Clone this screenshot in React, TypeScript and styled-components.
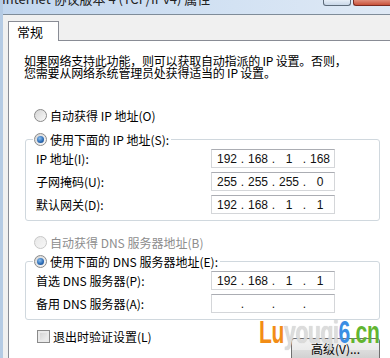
import styled, { createGlobalStyle } from 'styled-components'

const GlobalStyle = createGlobalStyle`
  html, body {
    margin: 0;
    padding: 0;
    background: #f0f0f0;
  }
  body {
    font-family: "Noto Sans CJK SC", "Liberation Sans", sans-serif;
    font-size: 12px;
    color: #000;
  }
`

interface RadioProps {
  $checked?: boolean
  $disabled?: boolean
}

const Radio: React.FC<RadioProps> = ({ $checked, $disabled }) => (
  <RadioOuter $disabled={$disabled}>{$checked && <RadioDot />}</RadioOuter>
)

const IpField: React.FC<{ parts: string[] }> = ({ parts }) => (
  <Field>
    {parts.map((p, i) => (
      <Part key={i}>
        {i > 0 && <Dot>.</Dot>}
        <Octet>{p}</Octet>
      </Part>
    ))}
  </Field>
)

const App: React.FC = () => {
  return (
    <Window>
      <GlobalStyle />
      <TitleBar>
        <TitleText>Internet 协议版本 4 (TCP/IPv4) 属性</TitleText>
        <Controls>
          <MaxButton />
          <CloseButton />
        </Controls>
      </TitleBar>
      <Body>
        <Tabs>
          <Tab>常规</Tab>
        </Tabs>
        <Panel>
          <Intro>
            如果网络支持此功能，则可以获取自动指派的 IP 设置。否则，
            <br />
            您需要从网络系统管理员处获得适当的 IP 设置。
          </Intro>

          <Choice $top={28}>
            <Radio />
            <span>自动获得 IP 地址(O)</span>
          </Choice>
          <Group $top={8}>
            <Legend>
              <Radio $checked />
              <span>使用下面的 IP 地址(S):</span>
            </Legend>
            <Row>
              <Label>IP 地址(I):</Label>
              <IpField parts={['192', '168', '1', '168']} />
            </Row>
            <Row>
              <Label>子网掩码(U):</Label>
              <IpField parts={['255', '255', '255', '0']} />
            </Row>
            <Row>
              <Label>默认网关(D):</Label>
              <IpField parts={['192', '168', '1', '1']} />
            </Row>
          </Group>

          <Choice $top={13} $disabled>
            <Radio $disabled />
            <span>自动获得 DNS 服务器地址(B)</span>
          </Choice>
          <Group $top={3}>
            <Legend>
              <Radio $checked />
              <span>使用下面的 DNS 服务器地址(E):</span>
            </Legend>
            <Row>
              <Label>首选 DNS 服务器(P):</Label>
              <IpField parts={['192', '168', '1', '1']} />
            </Row>
            <Row>
              <Label>备用 DNS 服务器(A):</Label>
              <IpField parts={['', '', '', '']} />
            </Row>
          </Group>

          <Footer>
            <CheckRow>
              <CheckBox />
              <span>退出时验证设置(L)</span>
            </CheckRow>
            <Button>高级(V)...</Button>
          </Footer>

          <Watermark>
            <span style={{ color: '#f28d16' }}>Lu</span>
            <Faded>youqi</Faded>
            <span style={{ color: '#3b8ee4' }}>6</span>
            <span style={{ color: '#62b531' }}>.cn</span>
          </Watermark>
        </Panel>
      </Body>
    </Window>
  )
}

const Window = styled.div`
  width: 390px;
  height: 358px;
  overflow: hidden;
  display: flex;
  flex-direction: column;
  border-left: 3px solid #b5cbe4;
  box-sizing: border-box;
  background: #f0f0f0;
  position: relative;
`

const TitleBar = styled.div`
  height: 14px;
  flex-shrink: 0;
  display: flex;
  justify-content: space-between;
  align-items: flex-start;
  overflow: hidden;
  background: linear-gradient(90deg, #c2d6ee 0%, #d3e2f3 60%, #dfe9f5 100%);
  border-bottom: 1px solid #7f8c99;
  margin-left: -3px;
`

const TitleText = styled.div`
  margin-top: -9px;
  margin-left: 2px;
  font-size: 13px;
  line-height: 16px;
  color: #222;
  white-space: nowrap;
`

const Controls = styled.div`
  display: flex;
  gap: 2px;
`

const MaxButton = styled.div`
  width: 26px;
  height: 5px;
  border: 1px solid #5d6b7a;
  border-top: none;
  border-radius: 0 0 3px 3px;
  background: linear-gradient(#e6eef7, #c9d7e8);
`

const CloseButton = styled.div`
  width: 36px;
  height: 5px;
  border: 1px solid #7a2a20;
  border-top: none;
  border-right: none;
  border-radius: 0 0 0 3px;
  background: linear-gradient(#e08d7b, #c8523b);
`

const Body = styled.div`
  flex: 1;
  display: flex;
  flex-direction: column;
  padding: 6px 0 0 5px;
`

const Tabs = styled.div`
  display: flex;
  position: relative;
  z-index: 1;
  margin-bottom: -1px;
`

const Tab = styled.div`
  width: 51px;
  height: 20px;
  box-sizing: border-box;
  border: 1px solid #898c95;
  border-bottom: none;
  background: #fff;
  padding-left: 8px;
  font-size: 13px;
  line-height: 20px;
`

const Panel = styled.div`
  flex: 1;
  background: #fff;
  border: 1px solid #898c95;
  border-right: none;
  padding-left: 15px;
  position: relative;
`

const Intro = styled.p`
  margin: 14px 0 0;
  font-size: 12px;
  line-height: 12px;
  letter-spacing: -0.2px;
  white-space: nowrap;
`

const Choice = styled.div<{ $top: number; $disabled?: boolean }>`
  display: flex;
  align-items: center;
  gap: 3px;
  height: 16px;
  margin-top: ${(p) => p.$top}px;
  margin-left: 10px;
  color: ${(p) => (p.$disabled ? '#8d8d8d' : '#000')};
`

const RadioOuter = styled.span<{ $disabled?: boolean }>`
  width: 13px;
  height: 13px;
  box-sizing: border-box;
  border-radius: 50%;
  border: 1px solid ${(p) => (p.$disabled ? '#c7c7c7' : '#8a8a8a')};
  background: ${(p) =>
    p.$disabled
      ? 'linear-gradient(135deg, #e8e8e8, #f7f7f7)'
      : 'linear-gradient(135deg, #d4d4d4, #fafafa)'};
  display: flex;
  align-items: center;
  justify-content: center;
  flex-shrink: 0;
`

const RadioDot = styled.span`
  width: 7px;
  height: 7px;
  border-radius: 50%;
  background: radial-gradient(circle at 40% 35%, #8cc0f0 0%, #2f6fb8 55%, #123d78 100%);
`

const Group = styled.fieldset<{ $top: number }>`
  margin: ${(p) => p.$top}px 0 0 1px;
  width: 355px;
  box-sizing: border-box;
  border: 1px solid #d0d8de;
  border-radius: 3px;
  padding: 0 0 4px 7px;
  min-width: 0;
`

const Legend = styled.legend`
  display: flex;
  align-items: center;
  gap: 3px;
  height: 16px;
  padding: 0 2px 0 1px;
`

const Row = styled.div`
  display: flex;
  align-items: center;
  height: 23px;
`

const Label = styled.span`
  width: 175px;
  margin-left: 3px;
  white-space: nowrap;
`

const Field = styled.div`
  width: 124px;
  height: 19px;
  box-sizing: border-box;
  border: 1px solid #d4d6d9;
  border-top-color: #abadb3;
  display: flex;
  align-items: center;
  padding-left: 3px;
  font-family: "Liberation Sans", sans-serif;
  font-size: 12px;
  color: #111;
`

const Part = styled.span`
  display: flex;
`

const Dot = styled.span`
  width: 7px;
  text-align: center;
`

const Octet = styled.span`
  width: 24px;
  text-align: center;
`

const Footer = styled.div`
  display: flex;
  justify-content: space-between;
  align-items: flex-start;
  width: 356px;
  margin-top: 8px;
`

const CheckRow = styled.div`
  display: flex;
  align-items: center;
  gap: 3px;
  height: 16px;
  margin-left: 13px;
`

const CheckBox = styled.span`
  width: 13px;
  height: 13px;
  box-sizing: border-box;
  border: 1px solid #8a8a8a;
  background: linear-gradient(135deg, #cfcfcf, #f6f6f6);
  box-shadow: inset 0 0 0 2px #eaeaea;
`

const Button = styled.div`
  width: 89px;
  height: 23px;
  margin-top: 10px;
  box-sizing: border-box;
  border: 1px solid #707070;
  border-radius: 3px;
  background: linear-gradient(#f2f2f2 0%, #ebebeb 50%, #dddddd 51%, #cfcfcf 100%);
  text-align: center;
  line-height: 20px;
  font-size: 12px;
`

const Watermark = styled.div`
  position: absolute;
  left: 250px;
  top: 276px;
  font-family: "Liberation Sans", sans-serif;
  font-weight: bold;
  font-size: 31px;
  line-height: 31px;
  transform: scaleX(0.68);
  transform-origin: left center;
  white-space: nowrap;
  letter-spacing: -0.5px;
`

const Faded = styled.span`
  color: rgba(225, 225, 225, 0.85);
  text-shadow: 0 0 1px rgba(150, 150, 150, 0.6);
`

export default App
